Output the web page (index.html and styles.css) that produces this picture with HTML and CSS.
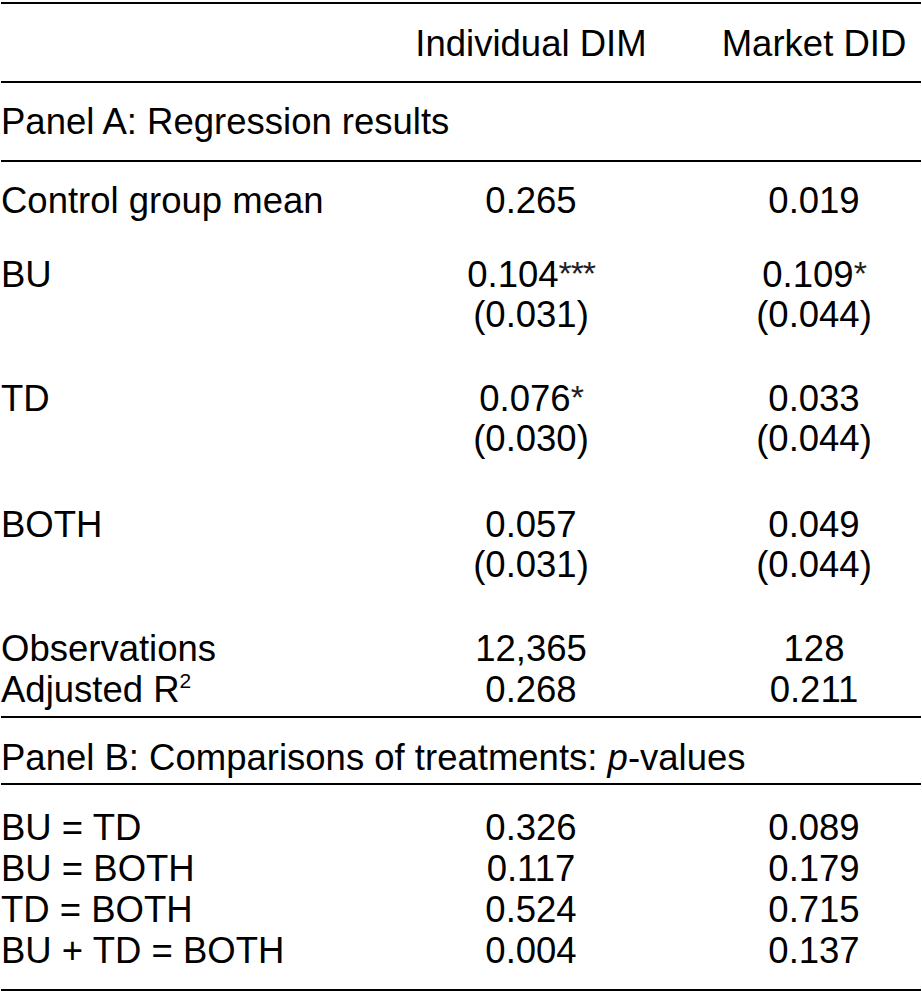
FILE: index.html
```html
<!DOCTYPE html>
<html lang="en">
<head>
<meta charset="utf-8">
<title>Regression table</title>
<link rel="stylesheet" href="styles.css">
</head>
<body>
<div class="tbl">
  <div class="row head">
    <div></div>
    <div class="c">Individual DIM</div>
    <div class="c">Market DID</div>
  </div>

  <div class="panel panel-a">Panel A: Regression results</div>

  <div class="sec sec-a">
    <div class="row">
      <div>Control group mean</div>
      <div class="c">0.265</div>
      <div class="c">0.019</div>
    </div>
    <div class="row gap-bu">
      <div>BU</div>
      <div class="c">0.104<span class="stars">***</span><br>(0.031)</div>
      <div class="c">0.109<span class="stars">*</span><br>(0.044)</div>
    </div>
    <div class="row gap-td">
      <div>TD</div>
      <div class="c">0.076<span class="stars">*</span><br>(0.030)</div>
      <div class="c">0.033<br>(0.044)</div>
    </div>
    <div class="row gap-both">
      <div>BOTH</div>
      <div class="c">0.057<br>(0.031)</div>
      <div class="c">0.049<br>(0.044)</div>
    </div>
    <div class="row gap-obs">
      <div>Observations</div>
      <div class="c">12,365</div>
      <div class="c">128</div>
    </div>
    <div class="row gap-adj">
      <div>Adjusted R<span class="sup">2</span></div>
      <div class="c">0.268</div>
      <div class="c">0.211</div>
    </div>
  </div>

  <div class="panel panel-b">Panel B: Comparisons of treatments: <i>p</i>-values</div>

  <div class="sec sec-b">
    <div class="row">
      <div>BU = TD</div>
      <div class="c">0.326</div>
      <div class="c">0.089</div>
    </div>
    <div class="row">
      <div>BU = BOTH</div>
      <div class="c">0.117</div>
      <div class="c">0.179</div>
    </div>
    <div class="row">
      <div>TD = BOTH</div>
      <div class="c">0.524</div>
      <div class="c">0.715</div>
    </div>
    <div class="row">
      <div>BU + TD = BOTH</div>
      <div class="c">0.004</div>
      <div class="c">0.137</div>
    </div>
  </div>
</div>
</body>
</html>
```

FILE: styles.css
```css
html, body {
  margin: 0;
  padding: 0;
  background: #fff;
}

body {
  font-family: "Liberation Sans", Arial, Helvetica, sans-serif;
  font-size: 36.5px;
  line-height: 40px;
  color: #000;
}

.tbl {
  width: 920px;
  margin: 2px 0 0 1px;
  border-top: 2px solid #000;
  border-bottom: 2px solid #000;
}

.row {
  display: grid;
  grid-template-columns: 354px 352px 214px;
}

.c {
  text-align: center;
  white-space: nowrap;
}

.head {
  padding: 20px 0 17px;
  border-bottom: 2px solid #000;
}

.panel-a {
  padding: 19px 0 18px;
  border-bottom: 2px solid #000;
}

.sec-a {
  padding: 19px 0 6px;
  border-bottom: 2px solid #000;
}

.gap-bu { margin-top: 34px; }
.gap-td { margin-top: 44px; }
.gap-both { margin-top: 46px; }
.gap-obs { margin-top: 44px; }
.gap-adj { margin-top: 1px; }

.panel-b {
  padding: 20px 0 5px;
  border-bottom: 2px solid #000;
}

.sec-b {
  padding: 22px 0 18px;
}

.sec-b .row {
  line-height: 41px;
}

.stars {
  font-size: 34px;
  font-weight: 400;
  color: #222;
  line-height: 0;
  letter-spacing: -1.2px;
  vertical-align: 2px;
}

.sup {
  font-size: 21px;
  line-height: 0;
  vertical-align: 14px;
}
```
